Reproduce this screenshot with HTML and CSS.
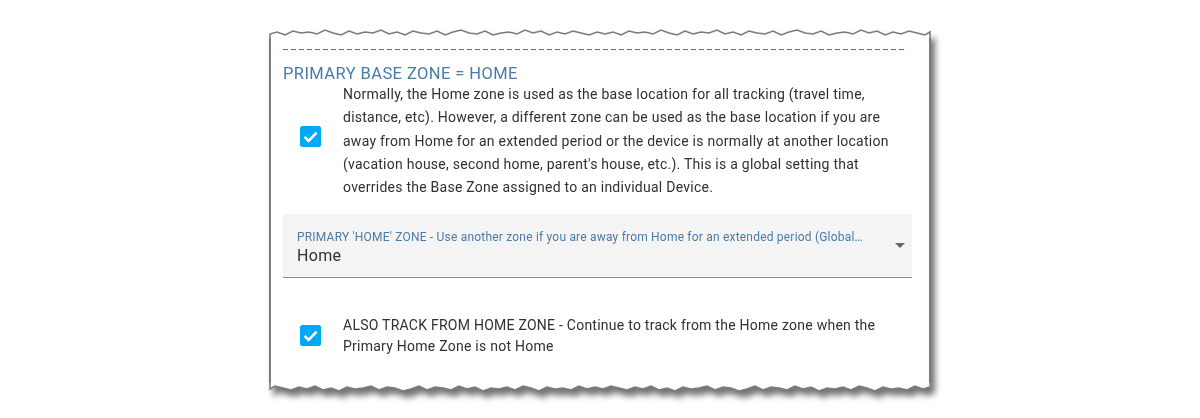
FILE: index.html
```html
<!DOCTYPE html>
<html>
<head>
<meta charset="utf-8">
<link rel="stylesheet" href="styles.css">
</head>
<body>
<div class="page">
  <div class="paper">
    <svg class="tear" width="662" height="9" viewBox="0 0 662 9">
      <polygon fill="#fff" points="0,9 0,5 8,3 16,6 24,2 32,4 40,3 48,5 56,1 64,4 72,6 80,2 88,5 96,3 104,4 112,1 120,5 128,3 136,6 144,2 152,4 160,5 168,2 176,6 184,3 192,1 200,4 208,5 216,2 224,6 232,4 240,3 248,5 256,1 264,4 272,2 280,6 288,3 296,5 304,2 312,4 320,6 328,3 336,5 344,3 352,6 360,2 368,4 376,3 384,5 392,1 400,4 408,6 416,2 424,5 432,3 440,4 448,1 456,5 464,3 472,6 480,2 488,4 496,5 504,2 512,6 520,3 528,1 536,4 544,5 552,2 560,6 568,4 576,3 584,5 592,1 600,4 608,2 616,6 624,3 632,5 640,2 648,4 656,6 662,3 662,9"/>
      <polyline fill="none" stroke="#7c7c7c" stroke-width="1.6" points="1,9 1,5 8,3 16,6 24,2 32,4 40,3 48,5 56,1 64,4 72,6 80,2 88,5 96,3 104,4 112,1 120,5 128,3 136,6 144,2 152,4 160,5 168,2 176,6 184,3 192,1 200,4 208,5 216,2 224,6 232,4 240,3 248,5 256,1 264,4 272,2 280,6 288,3 296,5 304,2 312,4 320,6 328,3 336,5 344,3 352,6 360,2 368,4 376,3 384,5 392,1 400,4 408,6 416,2 424,5 432,3 440,4 448,1 456,5 464,3 472,6 480,2 488,4 496,5 504,2 512,6 520,3 528,1 536,4 544,5 552,2 560,6 568,4 576,3 584,5 592,1 600,4 608,2 616,6 624,3 632,5 640,2 648,4 656,6 661,3 661,9"/>
    </svg>
    <div class="sheet">
      <svg class="divider" width="622" height="1" viewBox="0 0 622 1">
        <line x1="0" y1="0.5" x2="622" y2="0.5" stroke="#2f7ad0" stroke-width="1" stroke-dasharray="5 3"/>
      </svg>
      <h2 class="section-title">PRIMARY BASE ZONE = HOME</h2>
      <div class="option option-top">
        <div class="check-col">
          <svg class="checkbox" width="21" height="21" viewBox="0 0 21 21">
            <rect x="0" y="0" width="21" height="21" rx="2.5" fill="#03a9f4"/>
            <path d="M4.6 10.9 L8.6 14.9 L16.6 6.6" fill="none" stroke="#fff" stroke-width="2.6"/>
          </svg>
        </div>
        <p class="desc">Normally, the Home zone is used as the base location for all tracking (travel time, distance, etc). However, a different zone can be used as the base location if you are away from Home for an extended period or the device is normally at another location (vacation house, second home, parent's house, etc.). This is a global setting that overrides the Base Zone assigned to an individual Device.</p>
      </div>
      <div class="select">
        <div class="select-text">
          <div class="select-label">PRIMARY 'HOME' ZONE - Use another zone if you are away from Home for an extended period (Global…</div>
          <div class="select-value">Home</div>
        </div>
        <svg class="arrow" width="10" height="5" viewBox="0 0 10 5"><polygon points="0,0 10,0 5,5" fill="#666"/></svg>
      </div>
      <div class="option option-center">
        <div class="check-col">
          <svg class="checkbox" width="21" height="21" viewBox="0 0 21 21">
            <rect x="0" y="0" width="21" height="21" rx="2.5" fill="#03a9f4"/>
            <path d="M4.6 10.9 L8.6 14.9 L16.6 6.6" fill="none" stroke="#fff" stroke-width="2.6"/>
          </svg>
        </div>
        <p class="desc desc-tight">ALSO TRACK FROM HOME ZONE - Continue to track from the Home zone when the Primary Home Zone is not Home</p>
      </div>
    </div>
    <svg class="tear" width="662" height="9" viewBox="0 0 662 9">
      <g transform="translate(662,9) scale(-1,-1)">
        <polygon fill="#fff" points="0,9 0,5 8,3 16,6 24,2 32,4 40,3 48,5 56,1 64,4 72,6 80,2 88,5 96,3 104,4 112,1 120,5 128,3 136,6 144,2 152,4 160,5 168,2 176,6 184,3 192,1 200,4 208,5 216,2 224,6 232,4 240,3 248,5 256,1 264,4 272,2 280,6 288,3 296,5 304,2 312,4 320,6 328,3 336,5 344,3 352,6 360,2 368,4 376,3 384,5 392,1 400,4 408,6 416,2 424,5 432,3 440,4 448,1 456,5 464,3 472,6 480,2 488,4 496,5 504,2 512,6 520,3 528,1 536,4 544,5 552,2 560,6 568,4 576,3 584,5 592,1 600,4 608,2 616,6 624,3 632,5 640,2 648,4 656,6 662,3 662,9"/>
        <polyline fill="none" stroke="#7c7c7c" stroke-width="1.6" points="1,9 1,5 8,3 16,6 24,2 32,4 40,3 48,5 56,1 64,4 72,6 80,2 88,5 96,3 104,4 112,1 120,5 128,3 136,6 144,2 152,4 160,5 168,2 176,6 184,3 192,1 200,4 208,5 216,2 224,6 232,4 240,3 248,5 256,1 264,4 272,2 280,6 288,3 296,5 304,2 312,4 320,6 328,3 336,5 344,3 352,6 360,2 368,4 376,3 384,5 392,1 400,4 408,6 416,2 424,5 432,3 440,4 448,1 456,5 464,3 472,6 480,2 488,4 496,5 504,2 512,6 520,3 528,1 536,4 544,5 552,2 560,6 568,4 576,3 584,5 592,1 600,4 608,2 616,6 624,3 632,5 640,2 648,4 656,6 661,3 661,9"/>
      </g>
    </svg>
  </div>
</div>
</body>
</html>
```

FILE: styles.css
```css
html, body {
  margin: 0;
  padding: 0;
  background: #ffffff;
}

body {
  font-family: Roboto, "Liberation Sans", Arial, sans-serif;
  color: #303030;
}

.page {
  padding-top: 29px;
  padding-left: 269px;
  height: 389px;
}

.paper {
  width: 662px;
  filter: drop-shadow(4px 6px 3px rgba(0, 0, 0, 0.55));
}

.tear {
  display: block;
}

.sheet {
  background: #ffffff;
  border-left: 2px solid #7c7c7c;
  border-right: 2px solid #7c7c7c;
  padding: 11px 17px 26px 12px;
}

.divider {
  display: block;
}

.section-title {
  margin: 14px 0 0 0;
  font-size: 16.5px;
  line-height: 20px;
  font-weight: 400;
  letter-spacing: 0.42px;
  color: #4a7aa9;
}

.option {
  display: flex;
}

.option-top {
  align-items: flex-start;
  margin-top: -1px;
}

.option-center {
  align-items: center;
  margin-top: 37px;
}

.check-col {
  width: 60px;
  flex: none;
  padding-left: 17px;
  box-sizing: border-box;
}

.option-top .check-col {
  padding-top: 43px;
}

.option-center .check-col {
  margin-top: -1px;
}

.checkbox {
  display: block;
}

.desc {
  margin: 0;
  width: 575px;
  font-size: 14px;
  line-height: 23.3px;
  letter-spacing: 0.25px;
}

.desc-tight {
  line-height: 21px;
}

.select {
  margin-top: 15px;
  height: 63px;
  background: #f4f4f4;
  border-bottom: 1px solid #8a8a8a;
  border-radius: 4px 4px 0 0;
  display: flex;
  align-items: center;
  padding: 0 7px 0 14px;
}

.select-text {
  flex: 1;
  min-width: 0;
  margin-right: 23px;
  padding-top: 3px;
}

.select-label {
  font-size: 12px;
  line-height: 16px;
  letter-spacing: 0.2px;
  color: #4a7aa9;
  white-space: nowrap;
}

.select-value {
  margin-top: 1px;
  font-size: 16px;
  line-height: 20px;
  letter-spacing: 0.3px;
  color: #303030;
}

.arrow {
  display: block;
  flex: none;
}
```
